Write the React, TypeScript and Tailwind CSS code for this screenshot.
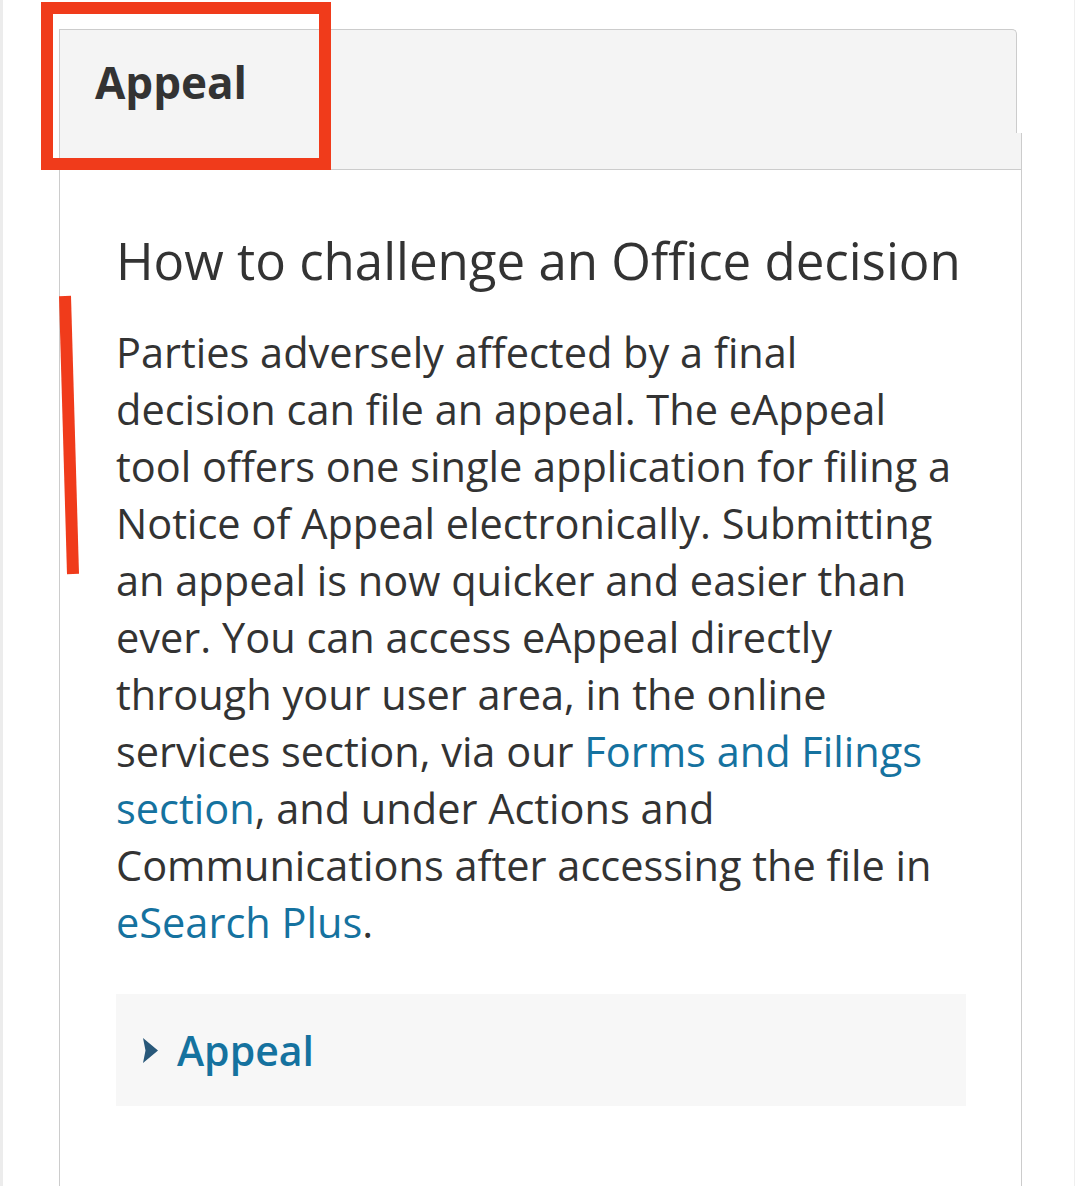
function Chevron() {
  return (
    <svg width="15" height="25" viewBox="0 0 15 25" className="shrink-0">
      <polygon points="0,0 15,12.5 0,25 2.5,12.5" fill="#28587a" />
    </svg>
  )
}

export default function App() {
  const link = 'text-[#15729f]'
  return (
    <div
      className="relative w-[1080px] h-[1186px] overflow-hidden bg-white text-[#333333]"
      style={{ fontFamily: '"Open Sans", "Noto Sans", sans-serif' }}
    >
      {/* page edges */}
      <div className="flex h-full">
        <div className="w-[3px] h-full bg-[#ececec] shrink-0" />
        <div className="ml-[56px] w-[963px] flex flex-col">
          {/* tab */}
          <div className="mt-[29px] w-[958px] h-[104px] bg-[#f4f4f4] border-t border-l border-r border-[#cccccc] rounded-tr-[5px] flex items-center pl-[35px]">
            <span className="text-[44px] font-bold text-[#333333] leading-none">Appeal</span>
          </div>
          <div className="h-[37px] bg-[#f4f4f4] border-l border-r border-b border-[#cccccc]" />

          {/* panel */}
          <div className="flex-1 border-l border-r border-[#cccccc] px-[56px] pt-[56px]">
            <h2 className="text-[51px] leading-[68px] font-normal text-[#333333] whitespace-nowrap">
              How to challenge an Office decision
            </h2>
            <p className="mt-[30px] text-[41.5px] leading-[57px] text-[#333333] whitespace-nowrap">
              Parties adversely affected by a final
              <br />
              decision can file an appeal. The eAppeal
              <br />
              tool offers one single application for filing a
              <br />
              Notice of Appeal electronically. Submitting
              <br />
              an appeal is now quicker and easier than
              <br />
              ever. You can access eAppeal directly
              <br />
              through your user area, in the online
              <br />
              services section, via our <a className={link}>Forms and Filings</a>
              <br />
              <a className={link}>section</a>, and under Actions and
              <br />
              Communications after accessing the file in
              <br />
              <a className={link}>eSearch Plus</a>.
            </p>

            <div className="mt-[43px] w-[850px] h-[112px] bg-[#f7f7f7] flex items-center pl-[27px] gap-[19px]">
              <Chevron />
              <span className="text-[41px] font-semibold text-[#15729f] leading-none">Appeal</span>
            </div>
          </div>
        </div>
        <div className="ml-[52px] w-px h-full bg-[#efefef]" />
      </div>

      {/* annotations */}
      <div className="absolute left-[41px] top-[2px] w-[290px] h-[168px] border-[12px] border-[#f03b1b]" />
      <svg className="absolute left-0 top-0" width="1080" height="1186">
        <line x1="65" y1="296" x2="73" y2="574" stroke="#f03b1b" strokeWidth="12" />
      </svg>
    </div>
  )
}
